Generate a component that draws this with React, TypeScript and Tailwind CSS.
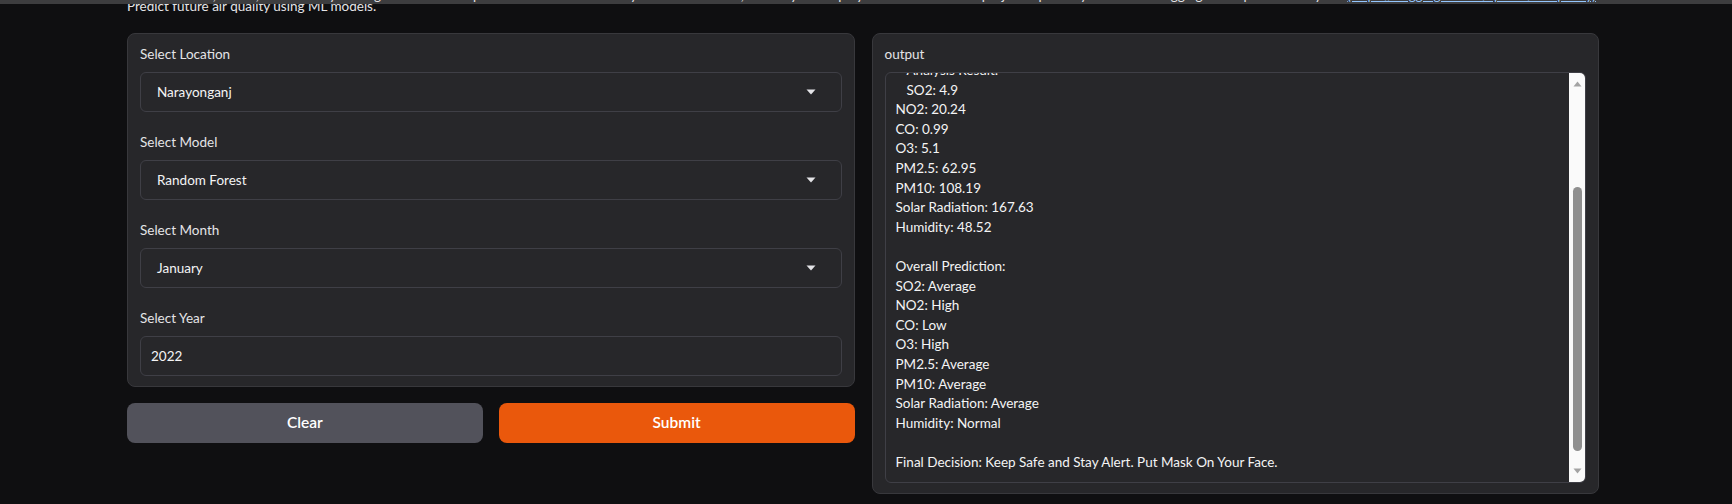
import { useState } from 'react';

const FONT = { fontFamily: 'Lato, "Noto Sans", sans-serif' };

const outputLines: { text: string; indent?: boolean }[] = [
  { text: 'Analysis Result:', indent: true },
  { text: 'SO2: 4.9', indent: true },
  { text: 'NO2: 20.24' },
  { text: 'CO: 0.99' },
  { text: 'O3: 5.1' },
  { text: 'PM2.5: 62.95' },
  { text: 'PM10: 108.19' },
  { text: 'Solar Radiation: 167.63' },
  { text: 'Humidity: 48.52' },
  { text: '' },
  { text: 'Overall Prediction:' },
  { text: 'SO2: Average' },
  { text: 'NO2: High' },
  { text: 'CO: Low' },
  { text: 'O3: High' },
  { text: 'PM2.5: Average' },
  { text: 'PM10: Average' },
  { text: 'Solar Radiation: Average' },
  { text: 'Humidity: Normal' },
  { text: '' },
  { text: 'Final Decision: Keep Safe and Stay Alert. Put Mask On Your Face.' },
];

function Caret() {
  return (
    <svg width="10" height="6" viewBox="0 0 10 6" className="shrink-0">
      <path d="M0.5 0.5 L9.5 0.5 L5 5.5 Z" fill="#e4e4e7" />
    </svg>
  );
}

function Dropdown({ label, value }: { label: string; value: string }) {
  return (
    <div className="flex flex-col gap-2">
      <span className="text-[13.5px] leading-5 text-[#e4e4e7]">{label}</span>
      <div className="flex h-10 items-center justify-between rounded-md border border-[#3f3f46] bg-[#27272a] pl-4 pr-[25px] text-[13.5px] text-[#f4f4f5]">
        <span>{value}</span>
        <Caret />
      </div>
    </div>
  );
}

function ScrollTrack() {
  return (
    <div className="flex w-4 shrink-0 flex-col items-center bg-[#fafafa] py-2">
      <svg width="9" height="6" viewBox="0 0 9 6">
        <path d="M4.5 0.5 L8.5 5.5 L0.5 5.5 Z" fill="#a3a3a3" />
      </svg>
      <div className="mt-[100px] h-[264px] w-[9px] rounded-full bg-[#8f8f8f]" />
      <div className="flex-1" />
      <svg width="9" height="6" viewBox="0 0 9 6">
        <path d="M0.5 0.5 L8.5 0.5 L4.5 5.5 Z" fill="#a3a3a3" />
      </svg>
    </div>
  );
}

export default function App() {
  const [year] = useState('2022');

  return (
    <div className="relative min-h-[504px] overflow-hidden bg-[#0f0f11] text-[#f4f4f5]" style={FONT}>
      <div className="absolute left-0 right-0 top-0 h-1 overflow-hidden bg-[#3d3d3f]">
        <p className="ml-[127px] -mt-[15px] whitespace-nowrap text-[13.5px] leading-5 text-[#e4e4e7]">
          Pick a location, model, month and year to get a forecast of pollutant levels and a safety recommendation, made by the deployed models from the project repository hosted on Hugging Face Spaces for anyone{' '}
          <span className="text-[#93c5fd] underline">(https://huggingface.co/spaces/air-quality)</span>
        </p>
      </div>

      <div className="ml-[127px] w-[1472px]">
        <p className="-mt-[4px] text-[13.5px] leading-5 text-[#e4e4e7]">Predict future air quality using ML models.</p>

        <div className="mt-[17px] grid grid-cols-2 items-start gap-[17px]">
          <div className="flex flex-col gap-4">
            <div className="flex flex-col gap-5 rounded-lg border border-[#38383c] bg-[#27272a] px-3 py-2.5">
              <Dropdown label="Select Location" value="Narayonganj" />
              <Dropdown label="Select Model" value="Random Forest" />
              <Dropdown label="Select Month" value="January" />
              <div className="flex flex-col gap-2">
                <span className="text-[13.5px] leading-5 text-[#e4e4e7]">Select Year</span>
                <div className="flex h-10 items-center rounded-md border border-[#3f3f46] bg-[#27272a] px-2.5 text-[13.5px]">
                  {year}
                </div>
              </div>
            </div>

            <div className="grid grid-cols-2 gap-4">
              <button className="h-10 rounded-lg bg-[#52525b] text-[15.5px] font-semibold text-white">Clear</button>
              <button className="h-10 rounded-lg bg-[#ea580c] text-[15.5px] font-semibold text-white">Submit</button>
            </div>
          </div>

          <div className="flex flex-col gap-2 rounded-lg border border-[#38383c] bg-[#27272a] px-3 pb-2.5 pt-2.5">
            <span className="text-[13.5px] leading-5 text-[#e4e4e7]">output</span>
            <div className="flex h-[411px] overflow-hidden rounded-md border border-[#3f3f46] bg-[#27272a]">
              <div className="flex-1 overflow-hidden px-2.5">
                <div className="-mt-[12px] text-[13.5px] leading-[19.6px] text-[#f4f4f5]">
                  {outputLines.map((line, i) => (
                    <div key={i} className={line.indent ? 'h-[19.6px] pl-[11px]' : 'h-[19.6px]'}>
                      {line.text}
                    </div>
                  ))}
                </div>
              </div>
              <ScrollTrack />
            </div>
          </div>
        </div>
      </div>
    </div>
  );
}
